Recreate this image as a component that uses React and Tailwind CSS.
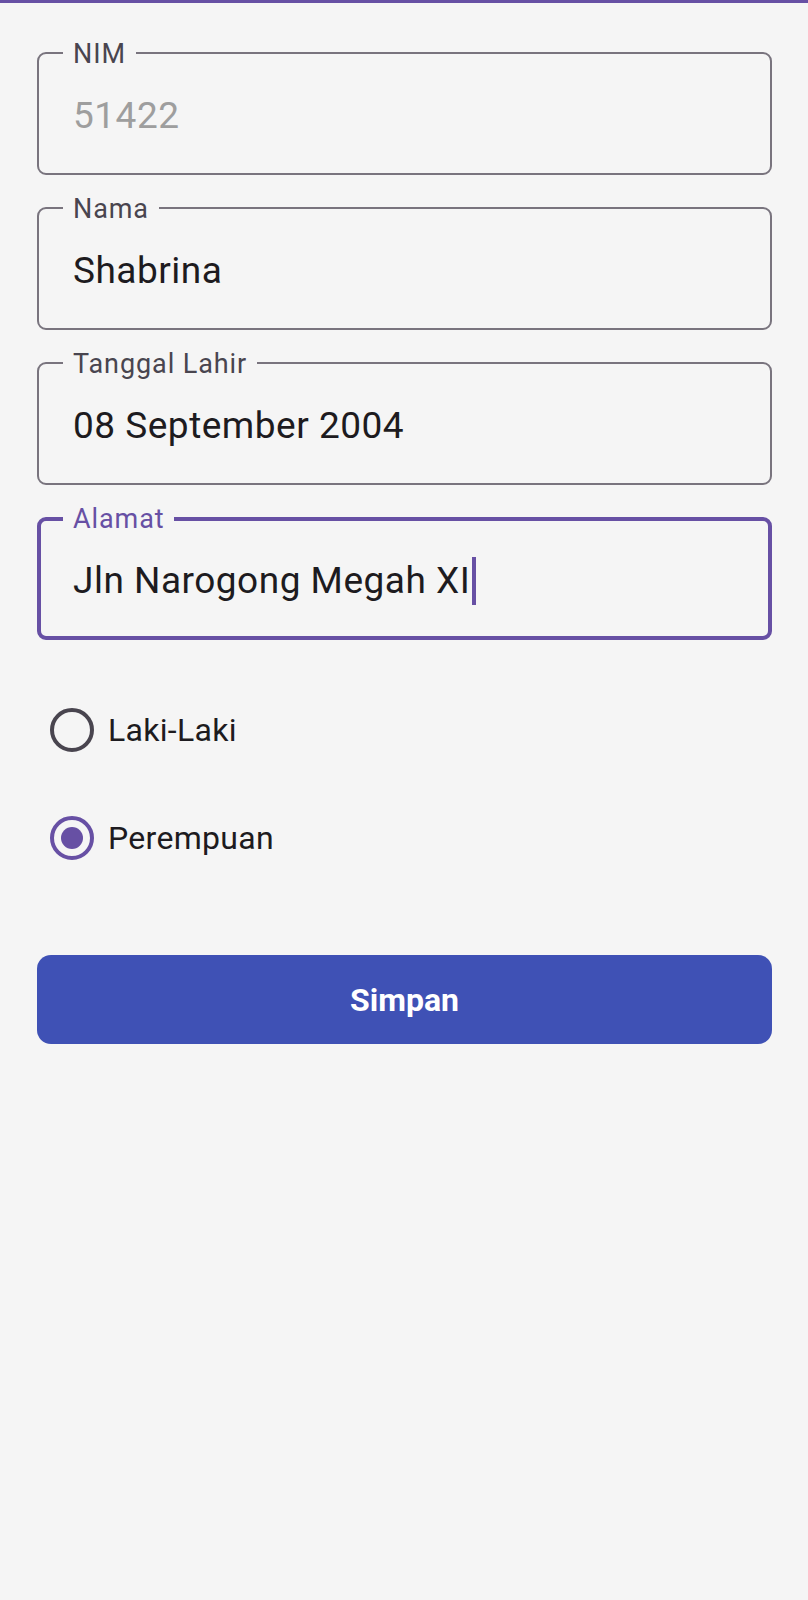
import React, { useState } from 'react';

const FIELDS = [
  { id: 'nim', label: 'NIM', value: '51422', muted: true },
  { id: 'nama', label: 'Nama', value: 'Shabrina' },
  { id: 'tgl', label: 'Tanggal Lahir', value: '08 September 2004' },
  { id: 'alamat', label: 'Alamat', value: 'Jln Narogong Megah XI', focused: true }
];

function Field({ label, value, muted, focused }) {
  return (
    <div
      className={`relative h-[123px] rounded-[9px] flex items-center pt-[4px] ${
        focused ? 'border-4 border-[#6750a4] pl-[32px]' : 'border-2 border-[#79747e] pl-[34px]'
      }`}
    >
      <span
        className={`absolute px-[10px] bg-[#f5f5f5] text-[27px] leading-[27px] tracking-[0.9px] ${
          focused ? 'top-[-15px] left-[22px] text-[#6750a4]' : 'top-[-13px] left-[24px] text-[#49454f]'
        }`}
      >
        {label}
      </span>
      <span className={`text-[37px] leading-[44px] tracking-[0.5px] ${muted ? 'text-[#9e9e9e]' : 'text-[#1d1b20]'}`}>
        {value}
      </span>
      {focused && <span className="w-[4px] h-[48px] bg-[#6750a4] ml-[2px]" />}
    </div>
  );
}

function Radio({ label, checked, onSelect }) {
  return (
    <button type="button" onClick={onSelect} className="h-[108px] flex items-center gap-[14px] pl-[13px] text-left">
      <span
        className={`w-[44px] h-[44px] rounded-full border-[4.5px] flex items-center justify-center ${
          checked ? 'border-[#6750a4]' : 'border-[#49454f]'
        }`}
      >
        {checked && <span className="w-[22px] h-[22px] rounded-full bg-[#6750a4]" />}
      </span>
      <span className="text-[32px] tracking-[0.3px] text-[#1d1b20]">{label}</span>
    </button>
  );
}

export default function App() {
  const [gender, setGender] = useState('p');

  return (
    <div className="min-h-screen bg-[#f5f5f5] font-[Roboto,sans-serif]">
      <div className="h-[3px] bg-[#6750a4]" />
      <div className="pl-[37px] pr-[36px] pt-[49px]">
        <div className="flex flex-col gap-[32px]">
          {FIELDS.map(f => (
            <Field key={f.id} {...f} />
          ))}
        </div>

        <div className="mt-[36px] flex flex-col">
          <Radio label="Laki-Laki" checked={gender === 'l'} onSelect={() => setGender('l')} />
          <Radio label="Perempuan" checked={gender === 'p'} onSelect={() => setGender('p')} />
        </div>

        <button
          type="button"
          className="mt-[63px] w-full h-[89px] rounded-[14px] bg-[#3f51b5] text-white text-[32px] font-bold"
        >
          Simpan
        </button>
      </div>
    </div>
  );
}
